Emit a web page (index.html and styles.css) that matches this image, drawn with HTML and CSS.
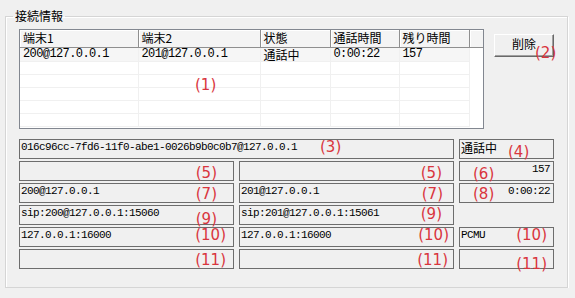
FILE: index.html
```html
<!DOCTYPE html>
<html lang="ja">

<head>
  <meta charset="UTF-8" />
  <meta name="viewport" content="width=device-width, initial-scale=1.0" />
  <title>接続情報</title>
  <link rel="stylesheet" href="styles.css">
</head>

<body>
  <fieldset class="group">
    <legend>接続情報</legend>
    <div class="top">
      <div class="list">
        <table>
          <thead>
            <tr>
              <th class="c1">端末1</th>
              <th class="c2">端末2</th>
              <th class="c3">状態</th>
              <th class="c4">通話時間</th>
              <th class="c5">残り時間</th>
              <th class="c6"></th>
            </tr>
          </thead>
          <tbody>
            <tr class="sel">
              <td class="mono">200@127.0.0.1</td>
              <td class="mono">201@127.0.0.1</td>
              <td>通話中</td>
              <td class="mono">0:00:22</td>
              <td class="mono">157</td>
              <td class="blank"></td>
            </tr>
            <tr><td></td><td></td><td></td><td></td><td></td><td class="blank"></td></tr>
            <tr><td></td><td></td><td></td><td></td><td></td><td class="blank"></td></tr>
            <tr><td></td><td></td><td></td><td></td><td></td><td class="blank"></td></tr>
            <tr><td></td><td></td><td></td><td></td><td></td><td class="blank"></td></tr>
            <tr><td></td><td></td><td></td><td></td><td></td><td class="blank"></td></tr>
          </tbody>
        </table>
        <span class="tag tag-1">(1)</span>
      </div>
      <div class="btn-wrap">
        <button class="btn">削除</button>
        <span class="tag tag-2">(2)</span>
      </div>
    </div>

    <div class="fields">
      <div class="box wide">016c96cc-7fd6-11f0-abe1-0026b9b0c0b7@127.0.0.1<span class="tag tag-3">(3)</span></div>
      <div class="box jp">通話中<span class="tag tag-4">(4)</span></div>

      <div class="box"><span class="tag tag-5a">(5)</span></div>
      <div class="box"><span class="tag tag-5b">(5)</span></div>
      <div class="box right">157<span class="tag tag-6">(6)</span></div>

      <div class="box">200@127.0.0.1<span class="tag tag-7a">(7)</span></div>
      <div class="box">201@127.0.0.1<span class="tag tag-7b">(7)</span></div>
      <div class="box right">0:00:22<span class="tag tag-8">(8)</span></div>

      <div class="box">sip:200@127.0.0.1:15060<span class="tag tag-9a">(9)</span></div>
      <div class="box">sip:201@127.0.0.1:15061<span class="tag tag-9b">(9)</span></div>
      <div class="empty"></div>

      <div class="box">127.0.0.1:16000<span class="tag tag-10a">(10)</span></div>
      <div class="box">127.0.0.1:16000<span class="tag tag-10b">(10)</span></div>
      <div class="box">PCMU<span class="tag tag-10c">(10)</span></div>

      <div class="box"><span class="tag tag-11a">(11)</span></div>
      <div class="box"><span class="tag tag-11b">(11)</span></div>
      <div class="box"><span class="tag tag-11c">(11)</span></div>
    </div>
  </fieldset>
</body>

</html>
```

FILE: styles.css
```css
* {
  box-sizing: border-box;
}

body {
  margin: 0;
  background: #f0f0f0;
  font-family: "Noto Sans CJK JP", sans-serif;
  font-size: 12px;
  color: #000;
}

.group {
  margin: 9px 0 0 5px;
  padding: 0 0 0 13px;
  width: 563px;
  height: 279px;
  border: 1px solid #d5d5d5;
  box-shadow: inset 1px 1px #fff, 1px 1px #fff;
}

.group legend {
  margin-left: -6px;
  padding: 0 2px;
  font-size: 12px;
  line-height: 14px;
}

.top {
  display: flex;
  margin-top: 6px;
}

.list {
  position: relative;
  width: 465px;
  height: 100px;
  border: 1px solid #828790;
  background: #fff;
  overflow: hidden;
}

.list table {
  border-collapse: collapse;
  table-layout: fixed;
  width: 463px;
}

.list th {
  height: 17px;
  padding: 0 0 0 3px;
  text-align: left;
  font-weight: normal;
  font-size: 12px;
  line-height: 14px;
  background: #f4f4f4;
  border-right: 1px solid #8f8f8f;
  border-bottom: 1px solid #8f8f8f;
  box-shadow: inset 1px 1px #fff;
}

.list .c1 { width: 118px; }
.list .c2 { width: 122px; }
.list .c3 { width: 70px; }
.list .c4 { width: 69px; }
.list .c5 { width: 70px; }
.list .c6 { width: 14px; border-right: none; }

.list td {
  height: 13px;
  padding: 0 0 0 3px;
  border-right: 1px solid #f0f0f0;
  border-bottom: 1px solid #f0f0f0;
  font-size: 12px;
  line-height: 13px;
  white-space: nowrap;
}

.list .sel td {
  height: 14px;
}

.list td.blank {
  border-right: none;
  border-bottom: none;
}

.list .sel td {
  background: #f6f6f6;
}

.list .sel td.blank {
  background: #fff;
}

.mono,
.box {
  font-family: "Liberation Mono", "Noto Sans CJK JP", monospace;
  font-size: 11px;
  letter-spacing: -0.6px;
}

.box.jp {
  font-family: "Noto Sans CJK JP", sans-serif;
  font-size: 12px;
  letter-spacing: 0;
}

.btn-wrap {
  position: relative;
  margin: 5px 0 0 10px;
}

.btn {
  width: 60px;
  height: 23px;
  padding: 0 0 4px;
  font-family: "Noto Sans CJK JP", sans-serif;
  font-size: 12px;
  background: #f0f0f0;
  border: 1px solid;
  border-color: #fff #696969 #696969 #fff;
  box-shadow: inset -1px -1px #a0a0a0;
  color: #000;
}

.fields {
  display: grid;
  grid-template-columns: 215px 215px 95px;
  grid-auto-rows: 20px;
  column-gap: 5px;
  row-gap: 2px;
  margin-top: 10px;
}

.box {
  position: relative;
  border: 1px solid #6d6d6d;
  padding: 1px 0 0 1px;
  line-height: 13px;
  white-space: nowrap;
}

.box.wide {
  grid-column: span 2;
}

.box.right {
  text-align: right;
  padding-right: 3px;
}

.tag {
  position: absolute;
  font-family: "DejaVu Sans", sans-serif;
  font-size: 15px;
  line-height: 15px;
  letter-spacing: 0;
  color: #d9363e;
}

.tag-1 { left: 175px; top: 48px; }
.tag-2 { left: 41px; top: 12px; }
.tag-3 { left: 300px; top: 0; }
.tag-4 { left: 48px; top: 5px; }
.tag-5a { right: 16px; top: 4px; }
.tag-5b { right: 11px; top: 4px; }
.tag-6 { left: 13px; top: 5px; }
.tag-7a { right: 16px; top: 3px; }
.tag-7b { right: 10px; top: 3px; }
.tag-8 { left: 13px; top: 3px; }
.tag-9a { right: 16px; top: 6px; }
.tag-9b { right: 11px; top: 1px; }
.tag-10a { right: 7px; top: 0; }
.tag-10b { right: 4px; top: 0; }
.tag-10c { right: 6px; top: 0; }
.tag-11a { right: 7px; top: 3px; }
.tag-11b { right: 5px; top: 3px; }
.tag-11c { right: 6px; top: 7px; }
```
